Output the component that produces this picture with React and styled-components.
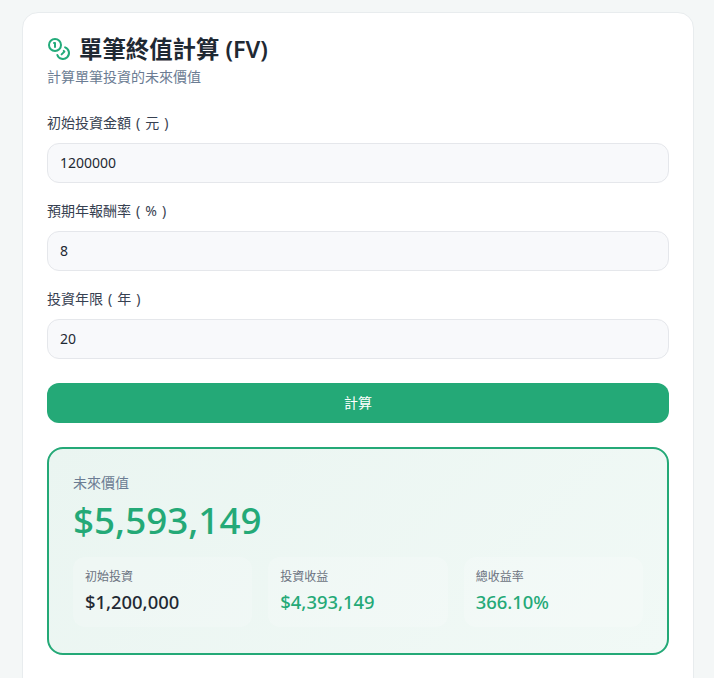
import React, { useState } from "react";
import styled, { createGlobalStyle } from "styled-components";
import { Coins } from "lucide-react";

const GlobalStyle = createGlobalStyle`
  html, body {
    margin: 0;
    padding: 0;
    height: 678px;
    overflow: hidden;
    background: #f4f7f7;
    font-family: "Noto Sans", "Noto Sans CJK TC", sans-serif;
  }
  * { box-sizing: border-box; }
`;

const Page = styled.div`
  padding: 12px 20px 0 22px;
`;

const Card = styled.div`
  background: #fff;
  border: 1px solid #e8ecee;
  border-radius: 16px;
  padding: 24px;
  height: 720px;
`;

const TitleRow = styled.div`
  display: flex;
  align-items: center;
  gap: 8px;
  height: 24px;
  color: #22ab7a;
`;

const Title = styled.h2`
  margin: 0;
  font-size: 23.4px;
  font-weight: 600;
  line-height: 24px;
  color: #1f2933;
`;

const Subtitle = styled.p`
  margin: 6px 0 26px;
  font-size: 14px;
  line-height: 20px;
  color: #6b7c93;
`;

const Field = styled.div`
  margin-bottom: 18px;
`;

const Label = styled.label`
  display: block;
  margin-bottom: 10px;
  font-size: 14px;
  line-height: 20px;
  word-spacing: 1.4px;
  color: #374151;
`;

const Input = styled.input`
  display: block;
  width: 100%;
  height: 40px;
  padding: 0 12px 2px;
  border: 1px solid #e5e7eb;
  border-radius: 12px;
  background: #f8f9fb;
  font: inherit;
  font-size: 14px;
  color: #1f2933;
  outline: none;
`;

const Button = styled.button`
  display: block;
  width: 100%;
  height: 40px;
  margin-top: 24px;
  padding: 0 0 2px;
  border: 0;
  border-radius: 12px;
  background: #24a977;
  color: #fff;
  font: inherit;
  font-size: 14px;
`;

const Result = styled.div`
  margin-top: 24px;
  height: 208px;
  padding: 24px;
  border: 2px solid #24a977;
  border-radius: 16px;
  background: linear-gradient(135deg, #eaf5f1, #f1f9f6);
`;

const ResultLabel = styled.div`
  font-size: 14px;
  line-height: 20px;
  color: #6b7c93;
`;

const ResultValue = styled.div`
  margin-top: 3px;
  font-size: 36.8px;
  font-weight: 500;
  line-height: 48px;
  color: #24a977;
`;

const Stats = styled.div`
  display: grid;
  grid-template-columns: repeat(3, 1fr);
  gap: 16px;
  margin-top: 13px;
`;

const Stat = styled.div`
  height: 70px;
  padding: 12px;
  border-radius: 12px;
  background: rgba(255, 255, 255, 0.2);
`;

const StatLabel = styled.div`
  font-size: 12px;
  line-height: 16px;
  color: #6b7280;
`;

const StatValue = styled.div`
  margin-top: 4px;
  font-size: 18.4px;
  font-weight: 500;
  line-height: 26px;
  color: ${props => (props.$accent ? "#24a977" : "#1f2933")};
`;

const fields = [
  { key: "pv", label: "初始投資金額 ( 元 )", value: "1200000" },
  { key: "rate", label: "預期年報酬率 ( % )", value: "8" },
  { key: "years", label: "投資年限 ( 年 )", value: "20" },
];

const stats = [
  { label: "初始投資", value: "$1,200,000" },
  { label: "投資收益", value: "$4,393,149", accent: true },
  { label: "總收益率", value: "366.10%", accent: true },
];

export default function App() {
  const [values, setValues] = useState({ pv: "1200000", rate: "8", years: "20" });

  return (
    <Page>
      <GlobalStyle />
      <Card>
        <TitleRow>
          <Coins size={24} />
          <Title>單筆終值計算 (FV)</Title>
        </TitleRow>
        <Subtitle>計算單筆投資的未來價值</Subtitle>
        {fields.map(field => (
          <Field key={field.key}>
            <Label>{field.label}</Label>
            <Input
              value={values[field.key]}
              onChange={e => setValues({ ...values, [field.key]: e.target.value })}
            />
          </Field>
        ))}
        <Button>計算</Button>
        <Result>
          <ResultLabel>未來價值</ResultLabel>
          <ResultValue>$5,593,149</ResultValue>
          <Stats>
            {stats.map(stat => (
              <Stat key={stat.label}>
                <StatLabel>{stat.label}</StatLabel>
                <StatValue $accent={stat.accent}>{stat.value}</StatValue>
              </Stat>
            ))}
          </Stats>
        </Result>
      </Card>
    </Page>
  );
}
